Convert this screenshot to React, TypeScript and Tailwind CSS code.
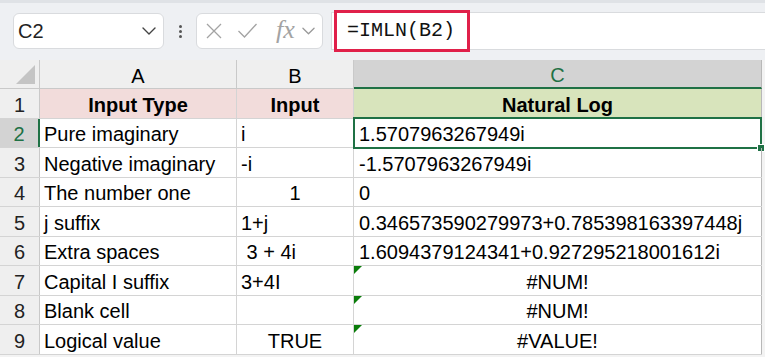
import React from 'react';

const font = { fontFamily: '"Liberation Sans", Arial, sans-serif' };

type Row = {
  n: number;
  a: string;
  b: string;
  bCenter?: boolean;
  c: string;
  cCenter?: boolean;
  flag?: boolean;
};

const rows: Row[] = [
  { n: 2, a: 'Pure imaginary', b: 'i', c: '1.5707963267949i' },
  { n: 3, a: 'Negative imaginary', b: '-i', c: '-1.5707963267949i' },
  { n: 4, a: 'The number one', b: '1', bCenter: true, c: '0' },
  { n: 5, a: 'j suffix', b: '1+j', c: '0.346573590279973+0.785398163397448j' },
  { n: 6, a: 'Extra spaces', b: '\u00a03 + 4i', c: '1.6094379124341+0.927295218001612i' },
  { n: 7, a: 'Capital I suffix', b: '3+4I', c: '#NUM!', cCenter: true, flag: true },
  { n: 8, a: 'Blank cell', b: '', c: '#NUM!', cCenter: true, flag: true },
  { n: 9, a: 'Logical value', b: 'TRUE', bCenter: true, c: '#VALUE!', cCenter: true, flag: true },
];

const Chevron = ({ className }: { className?: string }) => (
  <svg viewBox="0 0 14 8" className={className} fill="none" stroke="currentColor" strokeWidth="1.4" strokeLinecap="round" strokeLinejoin="round">
    <path d="M1 1l6 6 6-6" />
  </svg>
);

const Toolbar = () => (
  <div className="relative h-[60px] bg-[#eef0f3]">
    <div className="h-[3px] bg-[#dfe2e6]" />
    <div className="flex items-center h-[57px] pb-[1px]">
      {/* name box */}
      <div className="ml-[13px] w-[151px] h-[36px] bg-white border border-[#d9dbde] rounded-md flex items-center justify-between pl-[4px] pr-[7px]">
        <span className="text-[20px] text-[#222]" style={font}>C2</span>
        <Chevron className="w-[14px] h-[8px] text-[#444]" />
      </div>
      {/* dots */}
      <div className="w-[32px] flex flex-col items-center gap-[2px]">
        <div className="w-[3px] h-[3px] rounded-full bg-[#555]" />
        <div className="w-[3px] h-[3px] rounded-full bg-[#555]" />
        <div className="w-[3px] h-[3px] rounded-full bg-[#555]" />
      </div>
      {/* function buttons */}
      <div className="w-[127px] h-[36px] bg-white border border-[#d9dbde] rounded-md flex items-center pl-[9px] text-[#a3a3a3]">
        <svg viewBox="0 0 16 16" className="w-[16px] h-[16px]" fill="none" stroke="currentColor" strokeWidth="1.3">
          <path d="M1 1l14 14M15 1L1 15" />
        </svg>
        <svg viewBox="0 0 20 16" className="ml-[15px] w-[21px] h-[16px]" fill="none" stroke="currentColor" strokeWidth="1.3">
          <path d="M1 8l6 6L19 1" />
        </svg>
        <span className="ml-[18px] text-[26px] italic leading-none mb-[3px]" style={{ fontFamily: '"Liberation Serif", "Times New Roman", serif' }}>fx</span>
        <Chevron className="ml-[7px] w-[13px] h-[8px] text-[#999]" />
      </div>
      {/* formula bar */}
      <div className="ml-[8px] flex-1 h-[38px] bg-white border-y border-l border-[#d9dbde] flex items-center relative">
        <div className="absolute left-[2px] top-[-3px] w-[136px] h-[42px] border-[3px] border-[#e0204a]" />
        <span className="ml-[15px] text-[20px] text-[#111]" style={{ fontFamily: '"Liberation Mono", "Courier New", monospace' }}>=IMLN(B2)</span>
      </div>
    </div>
  </div>
);

const Flag = () => (
  <div className="absolute left-0 top-0 w-0 h-0 border-t-[8px] border-r-[8px] border-t-[#0a7d0a] border-r-transparent" />
);

const App = () => {
  const cellText = 'text-[20px] text-black whitespace-nowrap pt-[3px]';
  return (
    <div className="w-[765px] h-[357px] overflow-hidden bg-[#f3f3f3]" style={font}>
      <Toolbar />
      <div className="w-[762px]">
        {/* column headers */}
        <div className="flex h-[29px] bg-[#efefef] border-b border-[#c9c9c9]">
          <div className="relative w-[40px] border-r border-[#c9c9c9]">
            <div className="absolute right-[4px] bottom-[4px] w-0 h-0 border-l-[19px] border-b-[19px] border-l-transparent border-b-[#c4c4c4]" />
          </div>
          <div className={`w-[197px] flex items-center justify-center border-r border-[#c9c9c9] ${cellText} text-[#222]`}>A</div>
          <div className={`w-[117px] flex items-center justify-center border-r border-[#c9c9c9] ${cellText} text-[#222]`}>B</div>
          <div className="w-[408px] flex items-center justify-center bg-[#d3d3d3] border-r border-[#b8b8b8] border-b-[2px] border-b-[#1f7145] mb-[-1px] pt-[3px] text-[20px] text-[#1f7145]">C</div>
        </div>
        {/* row 1 */}
        <div className="flex h-[29.5px] border-b border-[#d4d4d4]">
          <div className="w-[40px] bg-[#efefef] border-r border-[#c9c9c9] flex items-center justify-center pt-[3px] text-[20px] text-[#222]">1</div>
          <div className={`w-[197px] bg-[#f2dcdb] border-r border-[#d4d4d4] flex items-center justify-center font-bold ${cellText}`}>Input Type</div>
          <div className={`w-[117px] bg-[#f2dcdb] border-r border-[#d4d4d4] flex items-center justify-center font-bold ${cellText}`}>Input</div>
          <div className={`w-[408px] bg-[#d8e4bc] border-r border-[#b8b8b8] flex items-center justify-center font-bold ${cellText}`}>Natural Log</div>
        </div>
        {rows.map((r) => {
          const sel = r.n === 2;
          return (
            <div key={r.n} className="flex h-[29.5px] border-b border-[#d4d4d4] bg-white">
              <div
                className={`w-[40px] flex items-center justify-center pt-[3px] text-[20px] border-r ${
                  sel ? 'bg-[#d3d3d3] text-[#1f7145] border-r-[2px] border-r-[#1f7145]' : 'bg-[#efefef] text-[#222] border-[#c9c9c9]'
                }`}
              >
                {r.n}
              </div>
              <div className={`w-[197px] border-r border-[#d4d4d4] flex items-center pl-[4px] overflow-hidden ${cellText}`}>{r.a}</div>
              <div
                className={`w-[117px] border-r border-[#d4d4d4] flex items-center overflow-hidden ${r.bCenter ? 'justify-center' : 'pl-[4px]'} ${cellText}`}
              >
                {r.b}
              </div>
              <div
                className={`relative w-[408px] border-r border-[#b8b8b8] flex items-center ${r.cCenter ? 'justify-center' : 'pl-[5px]'} ${cellText}`}
              >
                {r.flag && <Flag />}
                {sel && (
                  <>
                    <div className="absolute left-[-1px] top-[-2px] right-[-1px] bottom-[-2px] border-[2px] border-[#1f7145] pointer-events-none" />
                    <div className="absolute right-[-4px] bottom-[-5px] w-[8px] h-[8px] bg-[#1f7145] border border-white" />
                  </>
                )}
                {r.c}
              </div>
            </div>
          );
        })}
      </div>
    </div>
  );
};

export default App;
